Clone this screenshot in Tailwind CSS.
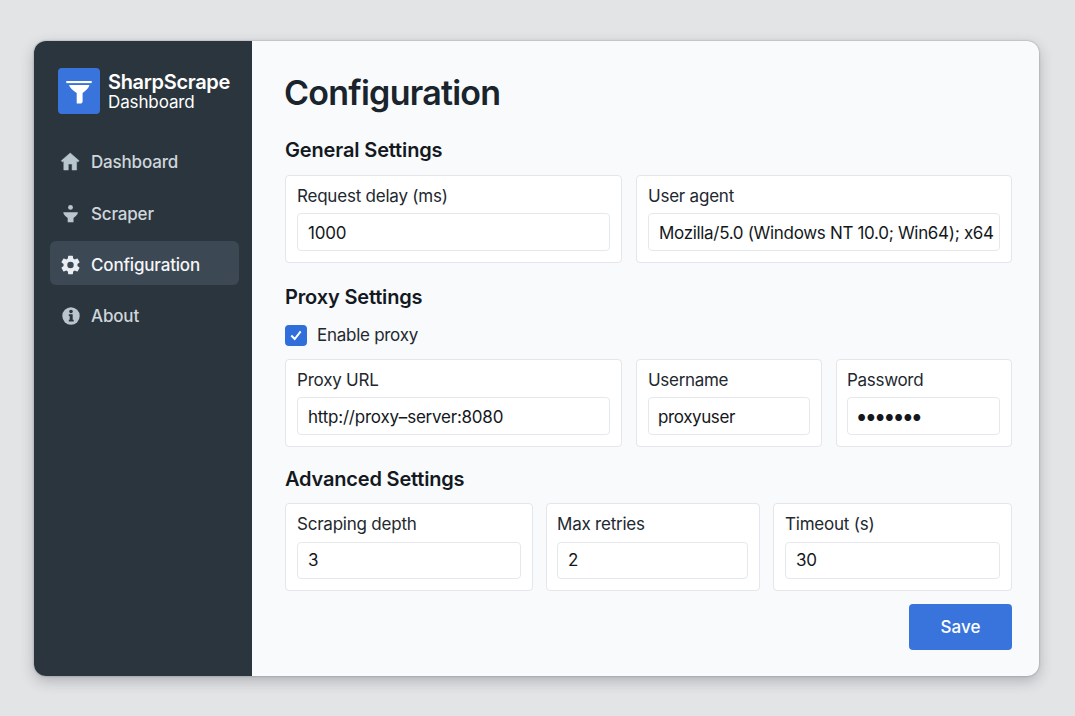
<!DOCTYPE html>
<html lang="en">
<head>
<meta charset="utf-8">
<title>SharpScrape Dashboard</title>
<script src="https://cdn.jsdelivr.net/npm/@tailwindcss/browser@4"></script>
</head>
<body class="w-[1075px] h-[716px] overflow-hidden bg-[#e3e4e6] pl-[34px] pt-[41px] font-['Inter',sans-serif]">
<div class="flex w-[1005px] h-[634.5px] rounded-xl overflow-hidden bg-[#f9fafc] shadow-[0_5px_14px_rgba(40,45,55,0.28),0_0_2px_rgba(40,45,55,0.4)]">
  <aside class="w-[218px] shrink-0 bg-[#2b353d] pt-[27px] pl-4">
    <div class="flex pl-2">
      <div class="w-[42px] h-[46px] rounded bg-[#3974dc]">
        <svg class="block" width="42" height="46" viewBox="0 0 42 46" fill="#fff"><rect x="8.300" y="13" width="25.400" height="2.100"/><path d="M11 17h20.500q-1 3.800-6.900 8v9l-1.200 1.500h-4.700V25Q12.300 20.800 11 17z"/></svg>
      </div>
      <div class="pl-2 pt-1 text-white whitespace-nowrap">
        <div class="h-5 leading-5 text-[20px] font-semibold tracking-[-0.33px]">SharpScrape</div>
        <div class="h-5 leading-5 text-[17px] tracking-[-0.12px]">Dashboard</div>
      </div>
    </div>
    <nav class="mt-[26px] w-[189px] text-[17px] font-medium tracking-[-0.17px] text-[#cfd6dc]">
      <a class="flex items-center h-11 mb-2 pl-[10px]"><svg class="mr-[10px]" width="21" height="22" viewBox="0 0 21 22" fill="#bac6ce"><path d="M10.200 2 1.300 9.700l1.200 1.400 1.300-1V19h4.500v-6h3.800v6h4.500v-8.900l1.300 1 1.200-1.400z" stroke="#bac6ce" stroke-width=".5" stroke-linejoin="round"/></svg><span class="pt-0.5">Dashboard</span></a>
      <a class="flex items-center h-11 mb-[5px] pl-[10px]"><svg class="mr-[10px]" width="21" height="22" viewBox="0 0 21 22" fill="#bac6ce"><circle cx="10.500" cy="4.400" r="2.400"/><path d="M3.300 9.200h14.600l-.4 1.700q-1.400 2.200-4 4v4.300h-5.800v-4.300q-2.800-1.800-4-4z"/></svg><span class="pt-0.5">Scraper</span></a>
      <a class="flex items-center h-11 mb-[7px] pl-[10px] pt-[3px] rounded-md bg-[#3c4854] text-[#f4f6f8]"><svg class="mr-[10px]" width="21" height="22" viewBox="1.200 1.200 21.600 21.600" fill="#e9eef2"><path d="M19.140 12.940a7.070 7.070 0 0 0 0-1.880l2.030-1.580a.5.5 0 0 0 .12-.61l-1.920-3.320a.49.49 0 0 0-.59-.22l-2.390.96a7 7 0 0 0-1.620-.94l-.36-2.540a.48.48 0 0 0-.48-.41h-3.840a.48.48 0 0 0-.47.41l-.36 2.540a7 7 0 0 0-1.620.94l-2.390-.96a.48.48 0 0 0-.59.22L2.740 8.870a.48.48 0 0 0 .12.610l2.030 1.580a7 7 0 0 0 0 1.880l-2.030 1.580a.5.5 0 0 0-.12.610l1.920 3.320c.12.220.37.290.59.220l2.390-.96a7 7 0 0 0 1.620.94l.36 2.540c.05.240.24.410.48.410h3.840c.24 0 .44-.17.47-.41l.36-2.540a7 7 0 0 0 1.620-.94l2.390.96c.22.080.47 0 .59-.22l1.920-3.320a.48.48 0 0 0-.12-.61zM12 15.300a3.300 3.300 0 1 1 0-6.600 3.300 3.300 0 0 1 0 6.600z"/></svg><span class="pt-0.5">Configuration</span></a>
      <a class="flex items-center h-11 pl-[10px] pt-[3px]"><svg class="mr-[10px]" width="21" height="22" viewBox="0 0 21 22"><circle cx="11" cy="11" r="8.700" fill="#bac6ce"/><g fill="#2b353d"><circle cx="11" cy="6.500" r="1.800"/><path d="M8.800 9.200h3.900v5.600h1v1.800H8.800v-1.800h.9v-3.800h-.9z"/></g></svg><span class="pt-0.5">About</span></a>
    </nav>
  </aside>
  <main class="w-[760px] ml-[33px] pt-8 text-[17px] tracking-[-0.22px] text-[#22282f]">
    <h1 class="-ml-px h-10 leading-10 text-[34px] font-semibold tracking-[-0.75px] text-[#19242c]">Configuration</h1>
    <h2 class="mt-[23px] h-7 leading-7 text-[20px] font-semibold tracking-[-0.14px] text-[#13191f]">General Settings</h2>
    <div class="mt-[11px] flex gap-[14px]">
      <label class="block w-[337px] h-[88px] rounded border border-[#e3e6ea] bg-white px-[11px] pt-2"><span class="block h-6 leading-6">Request delay (ms)</span><span class="mt-[5px] flex items-center h-[38px] rounded border border-[#e6e8eb] pl-[10px] pt-[3px] text-[#14181c]">1000</span></label>
      <label class="block w-[376px] h-[88px] rounded border border-[#e3e6ea] bg-white px-[11px] pt-2"><span class="block h-6 leading-6">User agent</span><span class="mt-[5px] flex items-center h-[38px] rounded border border-[#e6e8eb] pl-[10px] pt-[3px] whitespace-nowrap tracking-[-0.32px] text-[#14181c]">Mozilla/5.0 (Windows NT 10.0; Win64); x64</span></label>
    </div>
    <h2 class="mt-5 h-7 leading-7 text-[20px] font-semibold tracking-[-0.16px] text-[#13191f]">Proxy Settings</h2>
    <div class="mt-[13px] flex items-center h-[22px]"><span class="w-[22px] h-[21px] rounded bg-[#2f6edb]"><svg class="block" width="22" height="21" viewBox="0 0 22 21" fill="none" stroke="#fff" stroke-width="2"><path d="m6.300 10.500 3.400 3.500 6-7.700"/></svg></span><span class="ml-[10px] pt-0.5 tracking-[-0.27px]">Enable proxy</span></div>
    <div class="mt-[13px] flex gap-[14px]">
      <label class="block w-[337px] h-[88px] rounded border border-[#e3e6ea] bg-white px-[11px] pt-2"><span class="block h-6 leading-6">Proxy URL</span><span class="mt-[5px] flex items-center h-[38px] rounded border border-[#e6e8eb] pl-[10px] pt-[3px] text-[#14181c]">http://proxy–server:8080</span></label>
      <label class="block w-[186px] h-[88px] rounded border border-[#e3e6ea] bg-white px-[11px] pt-2"><span class="block h-6 leading-6 tracking-[-0.3px]">Username</span><span class="mt-[5px] flex items-center h-[38px] rounded border border-[#e6e8eb] pl-[9px] pt-[3px] tracking-[-0.4px] text-[#14181c]">proxyuser</span></label>
      <label class="block w-[176px] h-[88px] rounded border border-[#e3e6ea] bg-white pl-[10px] pr-[11px] pt-2"><span class="block h-6 leading-6 tracking-[-0.3px]">Password</span><span class="mt-[5px] flex items-center h-[38px] rounded border border-[#e6e8eb] pl-[9.5px] pt-[3px] text-[9px] tracking-[1px] text-[#14181c]">●●●●●●●</span></label>
    </div>
    <h2 class="mt-[18px] h-7 leading-7 text-[20px] font-semibold tracking-[-0.18px] text-[#13191f]">Advanced Settings</h2>
    <div class="mt-[10px] flex gap-[13px]">
      <label class="block w-[248px] h-[88px] rounded border border-[#e3e6ea] bg-white px-[11px] pt-2"><span class="block h-6 leading-6">Scraping depth</span><span class="mt-[6px] flex items-center h-[37px] rounded border border-[#e6e8eb] pl-[10px] pt-px text-[#14181c]">3</span></label>
      <label class="block w-[214px] h-[88px] rounded border border-[#e3e6ea] bg-white pl-[10px] pr-[11px] pt-2"><span class="block h-6 leading-6">Max retries</span><span class="mt-[6px] flex items-center h-[37px] rounded border border-[#e6e8eb] pl-[10px] pt-px text-[#14181c]">2</span></label>
      <label class="block w-[239px] h-[88px] rounded border border-[#e3e6ea] bg-white px-[11px] pt-2"><span class="block h-6 leading-6">Timeout (s)</span><span class="mt-[6px] flex items-center h-[37px] rounded border border-[#e6e8eb] pl-[10px] pt-px text-[#14181c]">30</span></label>
    </div>
    <div class="mt-[13px] flex w-[727px] justify-end"><button class="w-[103px] h-[46px] rounded bg-[#3974dc] pt-0.5 font-medium tracking-normal text-white">Save</button></div>
  </main>
</div>
</body>
</html>
